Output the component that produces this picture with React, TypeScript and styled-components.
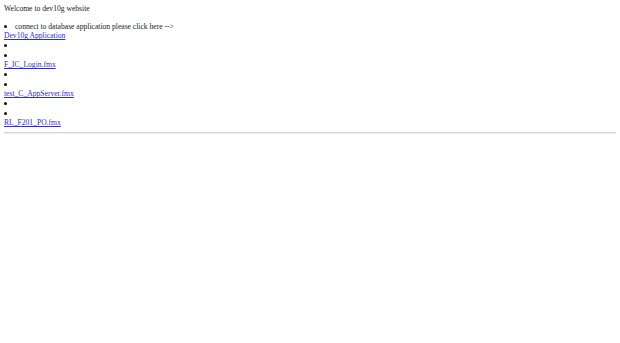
import React from "react";
import styled, { createGlobalStyle } from "styled-components";

const Global = createGlobalStyle`
  html, body { margin: 0; padding: 0; background: #fff; }
  body { padding: 4px; font-family: "Liberation Serif", "Times New Roman", serif; font-size: 7.6px; line-height: 9.65px; color: #222; }
`;

const Page = styled.div`
  display: flex;
  flex-direction: column;
`;

const Welcome = styled.div`
  margin-bottom: 8px;
`;

const Item = styled.div`
  display: flex;
  align-items: center;
  min-height: 9.65px;
  &::before {
    content: "";
    width: 3px;
    height: 3px;
    background: #111;
    border-radius: 50%;
    margin-left: 0;
    margin-right: 8px;
    flex: none;
  }
`;

const Link = styled.a`
  color: #2a2aee;
  text-decoration: underline;
  align-self: flex-start;
`;

const Rule = styled.hr`
  margin: 4px 0 0;
  border: none;
  border-top: 1px solid #d8d8d8;
  border-bottom: 1px solid #ececec;
  height: 0;
`;

const files = ["F_IC_Login.fmx", "test_C_AppServer.fmx", "RL_F201_PO.fmx"];

export default function App() {
  return (
    <Page>
      <Global />
      <Welcome>Welcome to dev10g website</Welcome>
      <Item>connect to database application please click here --&gt;</Item>
      <Link href="#">Dev10g Application</Link>
      {files.map((f) => (
        <React.Fragment key={f}>
          <Item />
          <Item />
          <Link href="#">{f}</Link>
        </React.Fragment>
      ))}
      <Rule />
    </Page>
  );
}
